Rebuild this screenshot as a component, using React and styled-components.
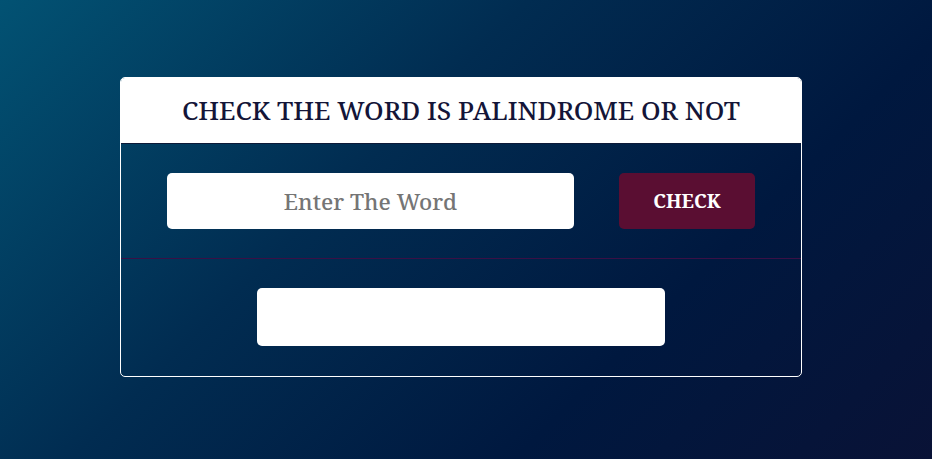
import React, { useState } from "react";
import styled, { createGlobalStyle } from "styled-components";

const GlobalStyle = createGlobalStyle`
  html, body {
    margin: 0;
    padding: 0;
    height: 100%;
  }
  body {
    font-family: "Noto Serif", "DejaVu Serif", serif;
  }
`;

const Page = styled.div`
  min-height: 100vh;
  background: linear-gradient(135deg, #025273 0%, #012c51 38%, #00183f 70%, #091236 100%);
  display: flex;
  align-items: flex-start;
  justify-content: flex-start;
  padding: 77px 0 0 120px;
  box-sizing: border-box;
`;

const Card = styled.div`
  width: 682px;
  box-sizing: border-box;
  border: 1px solid #ffffff;
  border-radius: 5px;
  display: flex;
  flex-direction: column;
  overflow: hidden;
`;

const Header = styled.h1`
  margin: 0;
  height: 66px;
  box-sizing: border-box;
  padding-bottom: 2px;
  background: #ffffff;
  color: #141538;
  font-size: 26px;
  font-weight: 500;
  display: flex;
  align-items: center;
  justify-content: center;
  border-bottom: 1px solid #0d1a38;
`;

const Row = styled.div`
  display: flex;
  align-items: center;
  justify-content: ${(p) => p.justify || "space-between"};
  padding: 29px 46px ${(p) => (p.divider ? "29px" : "30px")};
  border-bottom: ${(p) => (p.divider ? "1px solid #3a1045" : "none")};
`;

const Input = styled.input`
  width: 407px;
  height: 56px;
  box-sizing: border-box;
  border: none;
  border-radius: 5px;
  background: #ffffff;
  font-family: inherit;
  font-size: 22.5px;
  font-weight: 500;
  text-align: center;
  color: #333;
  outline: none;
  &::placeholder {
    color: #757575;
  }
`;

const Button = styled.button`
  width: 136px;
  height: 56px;
  border: none;
  border-radius: 5px;
  background: #5a0e32;
  color: #ffffff;
  font-family: inherit;
  font-size: 19px;
  font-weight: 700;
  cursor: pointer;
`;

const Result = styled.div`
  width: 408px;
  height: 58px;
  border-radius: 5px;
  background: #ffffff;
  display: flex;
  align-items: center;
  justify-content: center;
  font-size: 20px;
  color: #141538;
`;

export default function App() {
  const [word, setWord] = useState("");
  const [result, setResult] = useState("");

  const check = () => {
    const w = word.trim().toLowerCase();
    if (!w) return setResult("");
    setResult(w === w.split("").reverse().join("") ? "Palindrome" : "Not Palindrome");
  };

  return (
    <Page>
      <GlobalStyle />
      <Card>
        <Header>CHECK THE WORD IS PALINDROME OR NOT</Header>
        <Row divider>
          <Input
            placeholder="Enter The Word"
            value={word}
            onChange={(e) => setWord(e.target.value)}
          />
          <Button onClick={check}>CHECK</Button>
        </Row>
        <Row justify="center">
          <Result>{result}</Result>
        </Row>
      </Card>
    </Page>
  );
}
